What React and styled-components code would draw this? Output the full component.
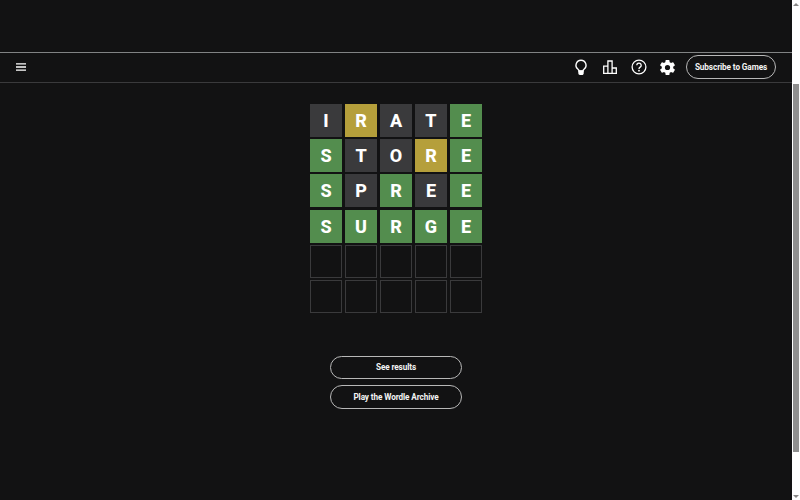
import React from "react";
import styled, { createGlobalStyle } from "styled-components";

const Global = createGlobalStyle`
  html, body { margin: 0; padding: 0; background: #121213; overflow: hidden; }
  * { box-sizing: border-box; }
`;

const Shell = styled.div`
  display: flex;
  width: 800px;
  height: 500px;
  overflow: hidden;
  background: #121213;
`;

const Page = styled.div`
  flex: 1;
  min-width: 0;
  display: flex;
  flex-direction: column;
  align-items: center;
`;

const AdSlot = styled.div`
  align-self: stretch;
  height: 52px;
`;

const Header = styled.header`
  align-self: stretch;
  height: 31px;
  display: flex;
  align-items: center;
  justify-content: space-between;
  border-top: 1px solid #818384;
  border-bottom: 1px solid #3a3a3c;
  padding: 0 16px 1px 16px;
`;

const Tools = styled.div`
  display: flex;
  align-items: center;
`;

const IconSlot = styled.span`
  display: flex;
  width: 29px;
  height: 29px;
  align-items: center;
  justify-content: center;
`;

const Subscribe = styled.span`
  width: 90px;
  height: 24px;
  margin-left: 4px;
  display: flex;
  align-items: center;
  justify-content: center;
  border: 1px solid #b8b8b8;
  border-radius: 12px;
  color: #f4f4f4;
  font: 700 8.2px "Roboto", "Liberation Sans", sans-serif;
  letter-spacing: -0.1px;
  white-space: nowrap;
`;

const Board = styled.div`
  margin-top: 21px;
  display: grid;
  grid-template-columns: repeat(5, 32.6px);
  grid-auto-rows: 33px;
  column-gap: 2.4px;
  row-gap: 2.2px;
`;

const tileColors = { c: "#538d4e", p: "#b59f3b", a: "#3a3a3c" };

const Tile = styled.div`
  display: flex;
  align-items: center;
  justify-content: center;
  background: ${(p) => tileColors[p.$state] || "transparent"};
  border: ${(p) => (p.$state ? "none" : "1px solid #3a3a3c")};
  color: #fff;
  font: 800 18px "Roboto", "Liberation Sans", sans-serif;
`;

const Actions = styled.div`
  margin-top: 43px;
  display: flex;
  flex-direction: column;
  gap: 6px;
`;

const Pill = styled.span`
  width: 132px;
  height: 23.5px;
  padding-bottom: 1px;
  display: flex;
  align-items: center;
  justify-content: center;
  border: 1px solid #b8b8b8;
  border-radius: 12px;
  color: #f4f4f4;
  font: 700 8.2px "Roboto", "Liberation Sans", sans-serif;
  letter-spacing: -0.1px;
`;

const ScrollTrack = styled.div`
  width: 8px;
  height: 500px;
  background: #fff;
  display: flex;
  flex-direction: column;
  align-items: center;
`;

const Arrow = styled.svg`
  flex: none;
  width: 8px;
  height: 8px;
`;

const Thumb = styled.div`
  width: 6px;
  height: 368px;
  margin: 76px 0 auto;
  background: #8f8f8f;
`;

const Menu = () => (
  <svg width="10" height="8" viewBox="0 0 10 8" fill="none" stroke="#fff" strokeWidth="1.3">
    <path d="M0 .8h10M0 4h10M0 7.2h10" />
  </svg>
);

const Bulb = () => (
  <svg width="18" height="18" viewBox="0 0 18 18" fill="none" stroke="#fff" strokeWidth="1.4">
    <path d="M9 2.2a5 5 0 0 0-3 9c.7.6 1 1.1 1 1.8h4c0-.7.3-1.2 1-1.8a5 5 0 0 0-3-9Z" />
    <path d="M7 13.2h4v2a1 1 0 0 1-1 1H8a1 1 0 0 1-1-1z" fill="#fff" />
  </svg>
);

const Stats = () => (
  <svg width="18" height="18" viewBox="0 0 18 18" fill="none" stroke="#fff" strokeWidth="1.3">
    <path d="M2.7 15.3V8.2h4.2v7.1M6.9 15.3V3h4.2v12.3M11.1 15.3V10h4.2v5.3M2 15.4h14" />
  </svg>
);

const Help = () => (
  <svg width="18" height="18" viewBox="0 0 18 18" fill="none" stroke="#fff">
    <circle cx="9" cy="9" r="6.9" strokeWidth="1.3" />
    <path d="M6.8 7.3a2.2 2.2 0 1 1 3.4 1.8c-.8.5-1.2.9-1.2 1.8" strokeWidth="1.3" />
    <circle cx="9" cy="12.7" r=".9" fill="#fff" stroke="none" />
  </svg>
);

const Gear = () => (
  <svg width="19" height="19" viewBox="0 0 24 24" fill="#fff">
    <path d="M19.14 12.94c.04-.3.06-.61.06-.94s-.02-.64-.07-.94l2.03-1.58a.5.5 0 0 0 .12-.61l-1.92-3.32a.5.5 0 0 0-.59-.22l-2.39.96a7 7 0 0 0-1.62-.94l-.36-2.54a.48.48 0 0 0-.48-.41h-3.84a.48.48 0 0 0-.47.41l-.36 2.54c-.59.24-1.13.57-1.62.94l-2.39-.96a.48.48 0 0 0-.59.22L2.74 8.87a.47.47 0 0 0 .12.61l2.03 1.58c-.05.3-.09.63-.09.94s.02.64.07.94l-2.03 1.58a.5.5 0 0 0-.12.61l1.92 3.32c.12.22.37.29.59.22l2.39-.96c.5.38 1.03.7 1.62.94l.36 2.54c.05.24.24.41.48.41h3.84c.24 0 .44-.17.47-.41l.36-2.54c.59-.24 1.13-.56 1.62-.94l2.39.96c.22.08.47 0 .59-.22l1.92-3.32a.46.46 0 0 0-.12-.61zM12 15.3A3.3 3.3 0 1 1 12 8.7a3.3 3.3 0 0 1 0 6.6z" />
  </svg>
);

const rows = [
  ["IRATE", "apaac"],
  ["STORE", "caapc"],
  ["SPREE", "cacac"],
  ["SURGE", "ccccc"],
  ["     ", "     "],
  ["     ", "     "],
];

export default function App() {
  return (
    <Shell>
      <Global />
      <Page>
        <AdSlot />
        <Header>
          <Menu />
          <Tools>
            <IconSlot><Bulb /></IconSlot>
            <IconSlot><Stats /></IconSlot>
            <IconSlot><Help /></IconSlot>
            <IconSlot><Gear /></IconSlot>
            <Subscribe>Subscribe to Games</Subscribe>
          </Tools>
        </Header>
        <Board>
          {rows.flatMap(([word, states], r) =>
            word.split("").map((ch, i) => (
              <Tile key={`${r}-${i}`} $state={states[i].trim()}>{ch.trim()}</Tile>
            ))
          )}
        </Board>
        <Actions>
          <Pill>See results</Pill>
          <Pill>Play the Wordle Archive</Pill>
        </Actions>
      </Page>
      <ScrollTrack>
        <Arrow viewBox="0 0 8 8"><path d="M4 3 7 6H1z" fill="#888" /></Arrow>
        <Thumb />
        <Arrow viewBox="0 0 8 8"><path d="M4 6 7 3H1z" fill="#888" /></Arrow>
      </ScrollTrack>
    </Shell>
  );
}
